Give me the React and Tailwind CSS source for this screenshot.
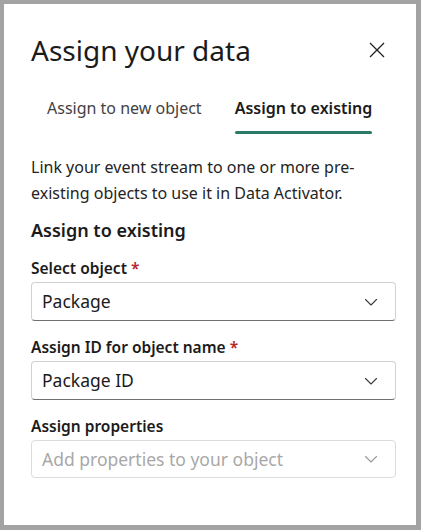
import React from "react";

const font = { fontFamily: "'Noto Sans', 'Open Sans', sans-serif" };

const Chevron = ({ muted }) => (
  <svg width="16" height="16" viewBox="0 0 16 16" fill="none">
    <path
      d="M2.5 5.5 L8 11 L13.5 5.5"
      stroke={muted ? "#9a9a9a" : "#3b3b3b"}
      strokeWidth="1.1"
      strokeLinecap="round"
      strokeLinejoin="round"
    />
  </svg>
);

const Label = ({ children, required }) => (
  <div className="text-[15.5px] font-semibold text-[#1b1b1b] leading-[20px]">
    {children}
    {required && <span className="text-[#b3262c]"> *</span>}
  </div>
);

const Dropdown = ({ value, placeholder }) => (
  <div
    className={`flex items-center justify-between pl-[10px] pr-[16px] rounded-[4px] border ${
      placeholder
        ? "h-[38px] border-[#dcdcdc]"
        : "h-[39px] border-[#d1d1d1] border-b-[#6f6f6f]"
    }`}
  >
    <span
      className={`text-[17.5px] ${placeholder ? "text-[#a8a8a8]" : "text-[#1b1b1b]"}`}
    >
      {value || placeholder}
    </span>
    <Chevron muted={!!placeholder} />
  </div>
);

export default function App() {
  return (
    <div
      style={font}
      className="w-[421px] h-[530px] bg-white border-l-4 border-t-4 border-r-[5px] border-b-[5px] border-[#a3a3a3]"
    >
      <div className="pl-[27px] pr-[20px] pt-[28px]">
        <div className="flex items-center justify-between">
          <h1 className="text-[28px] leading-[36px] font-normal text-[#1b1b1b]">
            Assign your data
          </h1>
          <svg width="18" height="18" viewBox="0 0 18 18" className="mr-[10px]">
            <path d="M2 2 L16 16 M16 2 L2 16" stroke="#222" strokeWidth="1.3" />
          </svg>
        </div>

        <div className="flex gap-[33px] pl-[16px] mt-[28px]">
          <div className="text-[16px] text-[#424242] pb-[12px]">
            Assign to new object
          </div>
          <div className="flex flex-col">
            <div className="text-[16px] font-semibold text-[#1b1b1b]">
              Assign to existing
            </div>
            <div className="h-[3px] mt-[11px] rounded-full bg-[#2c7a68]" />
          </div>
        </div>

        <p className="mt-[20px] text-[16px] leading-[26px] text-[#242424] pr-[20px]">
          Link your event stream to one or more pre-existing objects to use it
          in Data Activator.
        </p>

        <h2 className="mt-[11px] text-[18px] font-semibold text-[#1b1b1b] leading-[26px]">
          Assign to existing
        </h2>

        <div className="mt-[15px] flex flex-col gap-[4px]">
          <Label required>Select object</Label>
          <Dropdown value="Package" />
        </div>

        <div className="mt-[16px] flex flex-col gap-[4px]">
          <Label required>Assign ID for object name</Label>
          <Dropdown value="Package ID" />
        </div>

        <div className="mt-[16px] flex flex-col gap-[4px]">
          <Label>Assign properties</Label>
          <Dropdown placeholder="Add properties to your object" />
        </div>
      </div>
    </div>
  );
}
